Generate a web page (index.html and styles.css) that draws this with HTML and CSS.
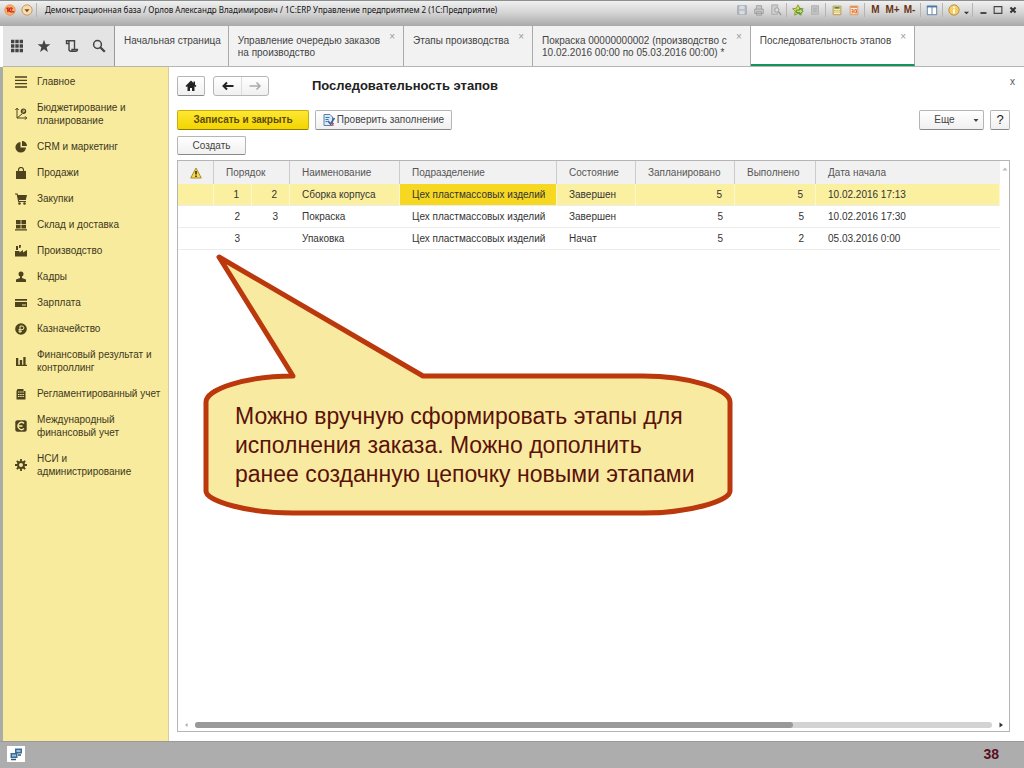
FILE: index.html
```html
<!DOCTYPE html>
<html lang="ru">
<head>
<meta charset="utf-8">
<title>Последовательность этапов</title>
<link rel="stylesheet" href="styles.css">
</head>
<body>
<div class="app">
  <header class="titlebar">
    <svg class="logo" viewBox="0 0 14 14" aria-hidden="true"><circle cx="7" cy="7" r="6" fill="#fbb26a" stroke="#e98b45"/><path d="M3 5.500L4.500 4.500V9.500M10 5.500C8 3.500 6 5 6 7S7.500 9.500 12 9.200M9.500 7H7.800" fill="none" stroke="#c8201c" stroke-width="1.500"/></svg>
    <button class="round" aria-label="Меню"><svg viewBox="0 0 14 14"><circle cx="7" cy="7" r="6" fill="#f8dcae" stroke="#c08c55"/><path d="M4 6h6L7 9.500z" fill="#7b4a25"/></svg></button>
    <span class="sep"></span>
    <span class="caption">Демонстрационная база / Орлов Александр Владимирович / 1С:ERP Управление предприятием 2 (1С:Предприятие)</span>
    <div class="tools">
      <button class="tool" aria-label="Сохранить"><svg viewBox="0 0 14 14"><path d="M2 2h10v10H2z" fill="#b6bcc4" stroke="#9ca3ad"/><path d="M4 2h6v4H4zM4 8h6v4H4z" fill="#d8dbe0"/></svg></button>
      <button class="tool" aria-label="Печать"><svg viewBox="0 0 14 14"><path d="M4 6V2h6v4M2 6h10v5H2zM4 9h6v4H4z" fill="#c9c9c9" stroke="#9b9b9b"/></svg></button>
      <button class="tool" aria-label="Просмотр"><svg viewBox="0 0 14 14"><path d="M2 1h7v11H2z" fill="#ccc" stroke="#a8a8a8"/><circle cx="8" cy="7" r="2.500" fill="#ddd" stroke="#999"/><path d="M10 9l3 4" stroke="#999" stroke-width="1.500"/></svg></button>
      <span class="sep"></span>
      <button class="tool" aria-label="В избранное"><svg viewBox="0 0 14 14"><path d="M7 1l2 4 4 .5-3 3 .8 4.500L7 11l-4 2 .8-4.500-3-3L5 5z" fill="#e3dd52" stroke="#80902c"/><path d="M5 7h4V5l4 3.500L9 12v-2H5z" fill="#b5e36b" stroke="#3a8430"/></svg></button>
      <button class="tool" aria-label="История"><svg viewBox="0 0 14 14"><path d="M3 2h8v10H3z" fill="#c4c4c4" stroke="#adadad"/><path d="M5 5h4M5 7h4M5 9h4" stroke="#aaa"/></svg></button>
      <span class="sep"></span>
      <button class="tool" aria-label="Калькулятор"><svg viewBox="0 0 14 14"><path d="M2.500 2.500h9v10h-9z" fill="#f5ecb4" stroke="#b58b3e"/><path d="M4 4.500h6" stroke="#4d8c3b" stroke-width="2"/><path d="M4.500 7v4M7 7v4M9.500 7v4" stroke="#b07030" stroke-dasharray="1 1"/></svg></button>
      <button class="tool" aria-label="Календарь"><svg viewBox="0 0 14 14"><path d="M2.500 2.500h9v10h-9z" fill="#fff1d2" stroke="#dd8b52"/><path d="M3 3.500h8" stroke="#e58b4c" stroke-width="2"/><path d="M4 6.500h2v4H4M4 8.500h2M8 6.500h2v4H8z" fill="none" stroke="#db5b35"/></svg></button>
      <span class="sep"></span>
      <button class="tool mem">M</button><button class="tool mem">M+</button><button class="tool mem">M-</button>
      <span class="sep"></span>
      <button class="tool" aria-label="Окна"><svg viewBox="0 0 14 14"><path d="M1.500 2.500h11v10h-11z" fill="#fff" stroke="#51749c"/><path d="M1 3h12" stroke="#4878b0" stroke-width="2"/><path d="M7 3v9" stroke="#51749c"/></svg></button>
      <span class="sep"></span>
      <button class="tool" aria-label="Справка"><svg viewBox="0 0 14 14"><circle cx="7" cy="7" r="6" fill="#f5cf66" stroke="#b08435"/><path d="M7 3v2M7 6v5" stroke="#fff" stroke-width="2"/></svg></button>
      <button class="tool small" aria-label="Ещё"><svg viewBox="0 0 8 14"><path d="M1 9h6L4 12z" fill="#333"/></svg></button>
      <span class="sep"></span>
      <button class="tool win" aria-label="Свернуть"><svg viewBox="0 0 14 14"><path d="M4 10.500h7" stroke="#333" stroke-width="2"/></svg></button>
      <button class="tool win" aria-label="Развернуть"><svg viewBox="0 0 14 14"><path d="M2.500 3h9v8h-9z" fill="none" stroke="#444" stroke-width="1.300"/></svg></button>
      <button class="tool win" aria-label="Закрыть"><svg viewBox="0 0 14 14"><path d="M4 4l6 6M10 4l-6 6" stroke="#333" stroke-width="2.300"/></svg></button>
    </div>
  </header>

  <nav class="tabbar">
    <div class="quick">
      <button class="tool" aria-label="Разделы"><svg viewBox="0 0 14 14"><path d="M1 2.500h12M1 7h12M1 11.500h12" stroke="#444" stroke-width="3.400" stroke-dasharray="3.400 0.900"/></svg></button>
      <button class="tool" aria-label="Избранное"><svg viewBox="0 0 14 14"><path d="M7 .8l1.600 4.400 4.800.1-3.800 2.900 1.300 4.700L7 10.200l-3.900 2.700 1.300-4.700L.6 5.300l4.800-.1z" fill="#444"/></svg></button>
      <button class="tool" aria-label="История"><svg viewBox="0 0 14 14"><path d="M4 4.500H1.500V1.700H9.500V10.500M4 1.700v8.500q0 2 2 2h5q1.500 0 1.500-1.700H7V12" fill="none" stroke="#444" stroke-width="1.400"/></svg></button>
      <button class="tool" aria-label="Поиск"><svg viewBox="0 0 14 14"><circle cx="5.500" cy="5.500" r="3.900" fill="none" stroke="#444" stroke-width="1.500"/><path d="M8.200 8.200l4.600 4.600" stroke="#444" stroke-width="2.300"/></svg></button>
    </div>
    <a class="tab home" href="#">Начальная страница</a>
    <div class="tab"><a href="#">Управление очередью заказов<br>на производство</a><button class="close" aria-label="Закрыть">×</button></div>
    <div class="tab"><a href="#">Этапы производства</a><button class="close" aria-label="Закрыть">×</button></div>
    <div class="tab"><a href="#">Покраска 00000000002 (производство с<br>10.02.2016 00:00 по 05.03.2016 00:00) *</a><button class="close" aria-label="Закрыть">×</button></div>
    <div class="tab active"><a href="#">Последовательность этапов</a><button class="close" aria-label="Закрыть">×</button></div>
  </nav>

  <div class="body">
    <nav class="sidebar">
      <a href="#"><svg viewBox="0 0 12 12"><path d="M0 1h12M0 4.300h12M0 7.600h12M0 11h12" stroke="#4d431d" stroke-width="1.300"/></svg>Главное</a>
      <a href="#"><svg viewBox="0 0 12 12"><path d="M2 0v10h10M.3 2L2 .3 3.700 2M10 8.300L11.700 10 10 11.700M2 10l5-4" fill="none" stroke="#4d431d"/><circle cx="8.500" cy="3.300" r="2.700" fill="#4d431d"/><path d="M8 5V2h1.500v1.500H8" fill="none" stroke="#f8eb9e" stroke-width=".6"/></svg><span>Бюджетирование и<br>планирование</span></a>
      <a href="#"><svg viewBox="0 0 12 12"><path d="M5.500 1v5.500H11A5.300 5.300 0 1 1 5.500 1z" fill="#4d431d"/><path d="M7 0a5 5 0 0 1 5 5H7z" fill="#4d431d"/></svg>CRM и маркетинг</a>
      <a href="#"><svg viewBox="0 0 12 12"><path d="M1 4h10v8H1z" fill="#4d431d"/><path d="M3.500 6V3a2.500 2.500 0 0 1 5 0v3" fill="none" stroke="#4d431d" stroke-width="1.200"/></svg>Продажи</a>
      <a href="#"><svg viewBox="0 0 12 12"><path d="M2.500 2H12l-1.200 5H3.500z" fill="#4d431d"/><path d="M0 1h2.200l1.500 7.500H11" fill="none" stroke="#4d431d" stroke-width="1.200"/><circle cx="4.500" cy="10.500" r="1.300" fill="#4d431d"/><circle cx="9.500" cy="10.500" r="1.300" fill="#4d431d"/></svg>Закупки</a>
      <a href="#"><svg viewBox="0 0 12 12"><path d="M1 1h4.600v4H1zM6.400 1H11v4H6.400zM1 5.700h4.600v3.800H1zM6.400 5.700H11v3.800H6.400zM0 10.300h12v1.200H0z" fill="#4d431d"/></svg>Склад и доставка</a>
      <a href="#"><svg viewBox="0 0 12 12"><path d="M0 11.500V6h4.500v1.500L8 5v2.500L12 5v6.500zM1 1h2v4H1zM4 0h2l-.5 3H4z" fill="#4d431d"/></svg>Производство</a>
      <a href="#"><svg viewBox="0 0 12 12"><circle cx="6" cy="3" r="2.500" fill="#4d431d"/><path d="M5 5h2v2l4 1.500V11H1V8.500L5 7z" fill="#4d431d"/></svg>Кадры</a>
      <a href="#"><svg viewBox="0 0 12 12"><path d="M0 2h12v1.800H0zM0 5h12v5H0z" fill="#4d431d"/><path d="M7 8h4" stroke="#f8eb9e"/></svg>Зарплата</a>
      <a href="#"><svg viewBox="0 0 12 12"><circle cx="6" cy="6" r="5.800" fill="#4d431d"/><path d="M5 10V3h2a1.800 1.800 0 0 1 0 3.700H3.500M3.500 8.300H7" fill="none" stroke="#f8eb9e"/></svg>Казначейство</a>
      <a href="#"><svg viewBox="0 0 12 12"><path d="M1 3h2.300v7H1zM4.800 5h2.300v5H4.800zM8.300 2h2.300v8H8.300zM1 9.800h11v1.200H1z" fill="#4d431d"/></svg><span>Финансовый результат и<br>контроллинг</span></a>
      <a href="#"><svg viewBox="0 0 12 12"><path d="M2.500 1h6v2h2v8.500h-9V3z" fill="#4d431d"/><path d="M3 4h6M3 6.500h6M3 8.500h6" stroke="#f8eb9e" stroke-width="1" stroke-dasharray="1.500 .7"/></svg>Регламентированный учет</a>
      <a href="#"><svg viewBox="0 0 12 12"><rect x=".3" y=".3" width="11.400" height="11.400" rx="2" fill="#4d431d"/><path d="M9 3.500A3.500 3.500 0 1 0 9 8.500M3 6h4.500" fill="none" stroke="#f8eb9e" stroke-width="1.300"/></svg><span>Международный<br>финансовый учет</span></a>
      <a href="#"><svg viewBox="0 0 12 12"><circle cx="6" cy="6" r="3" fill="none" stroke="#4d431d" stroke-width="2"/><path d="M6 0v2.500M6 9.500V12M0 6h2.500M9.500 6H12M1.800 1.800l1.700 1.700M8.500 8.500l1.700 1.700M1.800 10.200l1.700-1.700M8.500 3.500l1.700-1.700" stroke="#4d431d" stroke-width="1.800"/></svg><span>НСИ и<br>администрирование</span></a>
    </nav>

    <main class="workspace">
      <div class="heading">
        <button class="btn icon" aria-label="Домой"><svg viewBox="0 0 14 14"><path d="M7 1.500L1.500 7l1 1L3.500 7.200V12H6V9h2v3h2.500V7.200l1 .8 1-1L11 5.500V2.500H9.500V4z" fill="#222"/></svg></button>
        <div class="pair">
          <button aria-label="Назад"><svg viewBox="0 0 14 14"><path d="M12.500 7H2.500M6 3.500L2.500 7 6 10.500" fill="none" stroke="#222" stroke-width="2"/></svg></button>
          <button aria-label="Вперёд"><svg viewBox="0 0 14 14"><path d="M1.500 7h10M8.500 3.500L12 7l-3.500 3.500" fill="none" stroke="#aaa" stroke-width="1.500"/></svg></button>
        </div>
        <h1>Последовательность этапов</h1>
        <button class="shut" aria-label="Закрыть форму">x</button>
      </div>
      <div class="commands">
        <button class="btn primary">Записать и закрыть</button>
        <button class="btn check"><svg viewBox="0 0 12 12"><path d="M1 .5h6L9.500 3v8.500H1z" fill="#dce9f6" stroke="#5b7fa8"/><path d="M2.500 3.500h4M2.500 5.500h3M2.500 7.500h2" stroke="#3b73ad"/><path d="M5 7l2.500 3L11.500 4" fill="none" stroke="#3565a5" stroke-width="1.600"/><path d="M8 9l3 2.500M11 9l-3 2.500" stroke="#cc4a3e"/></svg>Проверить заполнение</button>
        <button class="btn more">Еще<svg viewBox="0 0 6 6"><path d="M.5 2h5L3 5z" fill="#444"/></svg></button>
        <button class="btn help">?</button>
      </div>
      <div class="commands second"><button class="btn create">Создать</button></div>

      <div class="grid">
        <div class="scroll">
          <table>
            <colgroup><col class="c-warn"><col class="c-num"><col class="c-num"><col class="c-name"><col class="c-dept"><col class="c-state"><col class="c-plan"><col class="c-done"><col></colgroup>
            <thead>
              <tr><th><svg class="warn" viewBox="0 0 12 12"><path d="M6 1l5.300 10H.7z" fill="#f6dc4c" stroke="#a98c2c" stroke-linejoin="round"/><path d="M6 4v3.500M6 8.500V10" stroke="#222" stroke-width="1.500"/></svg></th><th colspan="2">Порядок</th><th>Наименование</th><th>Подразделение</th><th>Состояние</th><th>Запланировано</th><th>Выполнено</th><th>Дата начала</th></tr>
            </thead>
            <tbody>
              <tr class="selected"><td></td><td class="num">1</td><td class="num">2</td><td>Сборка корпуса</td><td class="current">Цех пластмассовых изделий</td><td>Завершен</td><td class="num">5</td><td class="num">5</td><td>10.02.2016 17:13</td></tr>
              <tr><td></td><td class="num">2</td><td class="num">3</td><td>Покраска</td><td>Цех пластмассовых изделий</td><td>Завершен</td><td class="num">5</td><td class="num">5</td><td>10.02.2016 17:30</td></tr>
              <tr><td></td><td class="num">3</td><td></td><td>Упаковка</td><td>Цех пластмассовых изделий</td><td>Начат</td><td class="num">5</td><td class="num">2</td><td>05.03.2016 0:00</td></tr>
            </tbody>
          </table>
          <svg class="up" viewBox="0 0 6 6"><path d="M.5 4.500h5L3 1.500z" fill="#bbb"/></svg>
        </div>
        <div class="hbar">
          <svg viewBox="0 0 6 6"><path d="M4.500 1v4L2 3z" fill="#aaa"/></svg>
          <div class="track"><div class="thumb"></div></div>
          <svg viewBox="0 0 6 6"><path d="M1.500 .5v5L5 3z" fill="#333"/></svg>
        </div>
      </div>

      <aside class="callout">
        <svg viewBox="0 0 530 264" aria-hidden="true"><path d="M90 124L16 5L220 124H440C486 124 527 137 527 150V239C527 249 486 261 440 261H90C44 261 3 249 3 239V150C3 137 44 124 90 124Z" fill="#f9eaa2" stroke="#bb370c" stroke-width="5" stroke-linejoin="round"/></svg>
        <p>Можно вручную сформировать этапы для<br>исполнения заказа. Можно дополнить<br>ранее созданную цепочку новыми этапами</p>
      </aside>
    </main>
  </div>

  <footer class="statusbar">
    <button class="net" aria-label="Соединение"><svg viewBox="0 0 14 14"><path d="M6 1.500h7v5H6zM1.500 6h7v5h-7z" fill="#3c6a94"/><path d="M7.500 3h4v2h-4zM3 7.500h4v2H3z" fill="#9dc0dd"/><path d="M9 8h3M2 12.500h5" stroke="#38536b" stroke-width="1.500"/></svg></button>
    <span class="page">38</span>
  </footer>
</div>
</body>
</html>
```
FILE: styles.css
```css
* { box-sizing: border-box; }
body { margin: 0; font: 10px/12px "Liberation Sans", Arial, sans-serif; color: #444; }
button { font: inherit; color: inherit; padding: 0; border: 0; background: none; cursor: pointer; }
a { color: inherit; text-decoration: none; }
svg { display: block; flex: none; }

.app { display: flex; flex-direction: column; min-height: 100vh; background: #fff; }

.titlebar { display: flex; align-items: center; height: 26px; padding: 0 4px 7px 4px; border-top: 1px solid #8a8f90; background: linear-gradient(#f0f0f0, #d2d2d2 50%, #a9a9a9); }
.logo, .round svg { width: 12px; height: 12px; }
.round { margin-left: 5px; }
.sep { width: 1px; height: 14px; background: #b4b4b4; margin: 0 2px; }
.titlebar > .sep { margin: 0 8px 0 3px; }
.caption { font-family: "Noto Sans", "Liberation Sans", sans-serif; font-size: 8px; color: #111; white-space: nowrap; }
.tools { display: flex; align-items: center; margin-left: auto; }
.tool { display: flex; align-items: center; justify-content: center; width: 17px; height: 16px; }
.tool svg { width: 12px; height: 12px; }
.tool.small { width: 8px; }
.tool.small svg { width: 7px; }
.tool.win { width: 15px; }
.tool.mem { font-weight: bold; color: #6b3313; }

.tabbar { display: flex; height: 41px; margin-left: 3px; background: #efefef; border-bottom: 1px solid #b5b5b5; }
.quick { display: flex; align-items: center; justify-content: space-between; width: 112px; padding: 0 6px 0 5px; background: #e4e4e4; border-right: 1px solid #999; }
.quick svg { width: 14px; height: 14px; }
.tab { position: relative; padding: 9px 23px 0 9px; border-right: 1px solid #aaa; background: #f2f2f2; white-space: nowrap; }
.tab.home { padding-right: 7px; }
.tab.active { background: #fff; border-bottom: 2px solid #15935a; }
.close { position: absolute; top: 5px; right: 8px; color: #999; }

.body { display: flex; flex: 1; border-left: 3px solid #a9ada5; }
.sidebar { width: 166px; padding-top: 1px; background: #f8eb9e; border-right: 1px solid #d5cda0; line-height: 13px; color: #40381c; flex: none; }
.sidebar a { display: flex; align-items: center; gap: 10px; padding: 7px 0 6px 12px; white-space: nowrap; }
.sidebar svg { width: 12px; height: 12px; }

.workspace { position: relative; flex: 1; min-width: 0; display: flex; flex-direction: column; padding: 9px 14px 9px 8px; }
.heading { display: flex; align-items: center; height: 20px; }
.btn { display: flex; align-items: center; justify-content: center; height: 20px; border: 1px solid #b5b5b5; border-bottom-color: #888; border-radius: 2px; background: linear-gradient(#fff, #f0f0f0); white-space: nowrap; }
.icon { width: 28px; }
.icon svg, .pair svg { width: 14px; height: 14px; }
.pair { display: flex; margin-left: 8px; border: 1px solid #b5b5b5; border-radius: 3px; background: linear-gradient(#fff, #f0f0f0); }
.pair button { display: flex; align-items: center; justify-content: center; width: 27px; height: 18px; }
.pair button + button { border-left: 1px solid #ddd; }
h1 { margin: 0 0 0 43px; font-size: 13px; line-height: 20px; font-weight: bold; color: #222; }
.shut { margin-left: auto; align-self: flex-start; margin-right: -5px; color: #555; }
.commands { display: flex; margin-top: 14px; }
.commands.second { margin-top: 6px; }
.primary { width: 132px; background: linear-gradient(#fde732, #f3d500); border-color: #c9ae0d; border-bottom-color: #8f7c0a; font-weight: bold; color: #5c4a0c; }
.check { width: 137px; margin-left: 6px; gap: 2px; }
.check svg { width: 12px; height: 12px; }
.more { width: 65px; margin-left: auto; padding-left: 10px; gap: 18px; }
.more svg { width: 6px; height: 6px; }
.help { width: 20px; margin-left: 6px; font-size: 13px; color: #222; }
.create { width: 69px; height: 19px; }

.grid { display: flex; flex-direction: column; flex: 1; margin-top: 5px; border: 1px solid #b5b5b5; }
.scroll { display: flex; flex: 1; align-items: flex-start; }
.up { width: 6px; height: 6px; margin: 5px 1px 0 2px; }
table { flex: 1; width: 0; border-collapse: separate; border-spacing: 0; table-layout: fixed; }
.c-warn { width: 36px; } .c-num { width: 38px; } .c-name { width: 110px; } .c-dept { width: 157px; }
.c-state { width: 79px; } .c-plan { width: 99px; } .c-done { width: 81px; }
th { height: 23px; padding: 0 0 0 12px; text-align: left; font-weight: normal; background: #f1f1f1; border-right: 1px solid #ccc; white-space: nowrap; color: #555; }
th:last-child { border-right: 0; }
td { height: 22px; padding: 0 0 0 12px; border-bottom: 1px solid #ececec; white-space: nowrap; color: #333; }
td.num { text-align: right; padding: 0 12px 0 0; }
.selected td { background: #fbf0a0; border-right: 1px solid #fdf7cf; }
.selected td.current { background: #f6d822; }
.warn { width: 12px; height: 12px; }
.hbar { display: flex; align-items: center; gap: 6px; height: 12px; padding: 0 5px; }
.hbar svg { width: 6px; height: 6px; }
.track { flex: 1; height: 6px; border-radius: 3px; background: #d3d3d3; }
.thumb { width: 75%; height: 6px; border-radius: 3px; background: #999; }

.callout { position: absolute; left: 34px; top: 185px; width: 530px; height: 264px; }
.callout svg { position: absolute; width: 100%; height: 100%; }
.callout p { position: relative; margin: 0; padding: 150px 0 0 32px; font-size: 23px; line-height: 29px; color: #5a1208; white-space: nowrap; }

.statusbar { display: flex; align-items: center; justify-content: space-between; height: 27px; padding: 0 25px 3px 7px; background: #adadad; border-top: 1px solid #999; }
.net { width: 18px; height: 16px; background: #fff; }
.net svg { width: 14px; height: 14px; margin: 0 auto; }
.page { font-size: 14px; font-weight: bold; color: #5a0f22; }
```
